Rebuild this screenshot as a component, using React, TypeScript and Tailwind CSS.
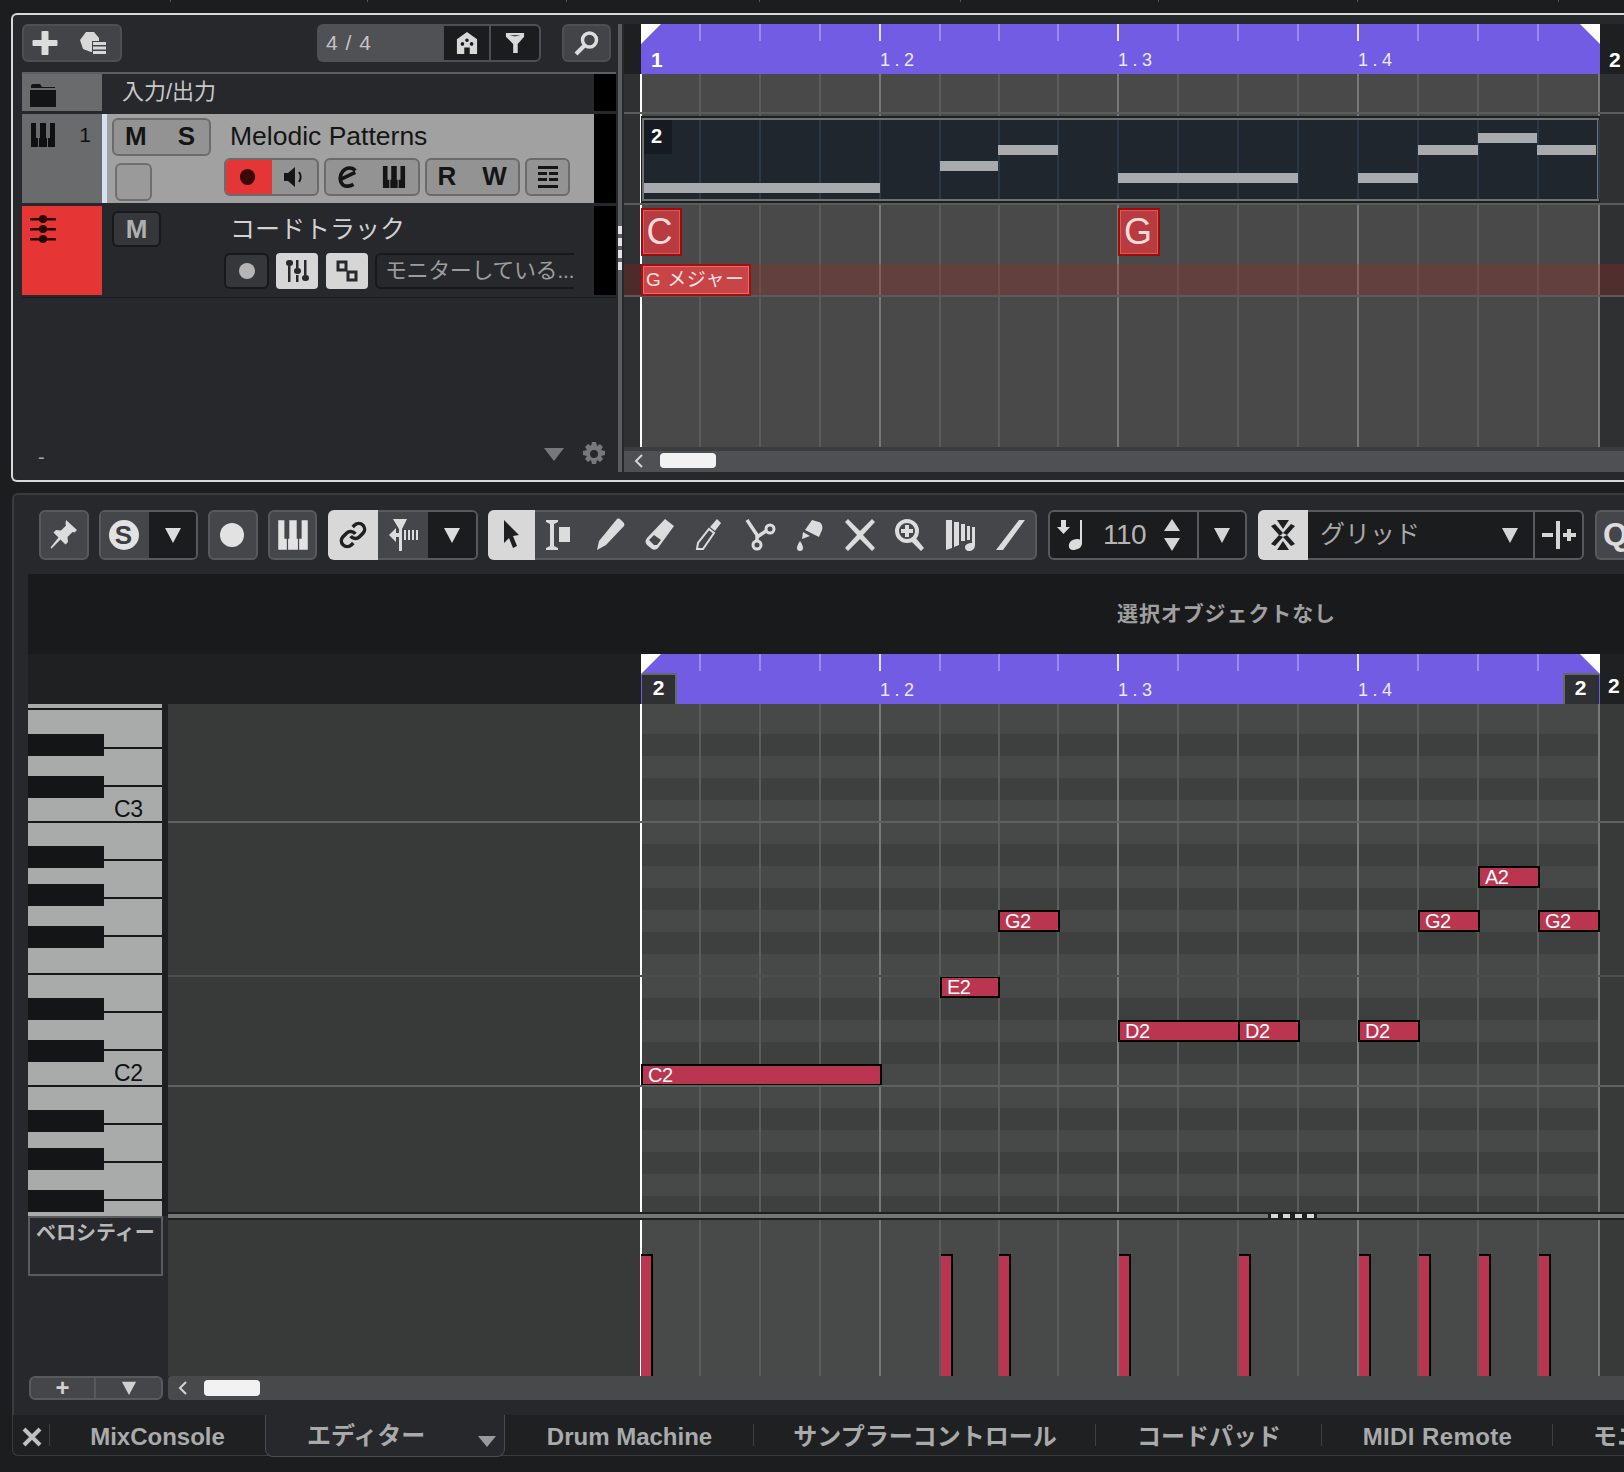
import React from 'react';

const lineLefts = [58, 118, 178, 238, 298, 357, 416, 476, 536, 596, 656, 716, 776, 836, 896, 957];
const beatLines = lineLefts.map((left, i) => ({ left, major: (i + 1) % 4 === 0 }));

const partNotes = [
  { x: 644, end: 880, y: 183 }, { x: 940, end: 998, y: 161 }, { x: 998, end: 1058, y: 145 },
  { x: 1118, end: 1298, y: 173 }, { x: 1358, end: 1418, y: 173 }, { x: 1418, end: 1478, y: 145 },
  { x: 1478, end: 1537, y: 133 }, { x: 1537, end: 1596, y: 145 },
];

const rollNotes = [
  { x: 641, end: 882, y: 1064, label: 'C2' }, { x: 940, end: 1000, y: 976, label: 'E2' },
  { x: 998, end: 1060, y: 910, label: 'G2' }, { x: 1118, end: 1240, y: 1020, label: 'D2' },
  { x: 1238, end: 1300, y: 1020, label: 'D2' }, { x: 1358, end: 1420, y: 1020, label: 'D2' },
  { x: 1418, end: 1480, y: 910, label: 'G2' }, { x: 1478, end: 1540, y: 866, label: 'A2' },
  { x: 1538, end: 1600, y: 910, label: 'G2' },
];

const velocityBars = [641, 941, 999, 1119, 1239, 1359, 1419, 1479, 1539];

const rows = [
  [8, 1], [22, 1], [22, 0], [22, 1], [22, 0], [22, 1], [22, 1], [22, 0], [22, 1], [22, 0], [22, 1], [22, 0],
  [22, 1], [22, 1], [22, 0], [22, 1], [22, 0], [22, 1], [22, 1], [22, 0], [22, 1], [22, 0], [22, 1], [16, 0],
];

const blackKeys = [734, 776, 846, 884, 926, 998, 1040, 1110, 1148, 1190];
const keyLines = [747, 785, 859, 897, 935, 1011, 1049, 1123, 1161, 1199];
const fullKeyLines = [708, 821, 973, 1085];

function GridLines({ part = false }: { part?: boolean }) {
  return (
    <>
      {beatLines.map((l) => (
        <div
          key={l.left}
          className={`absolute top-0 bottom-0 w-[2px] ${part ? 'bg-[#2a3848]' : l.major ? 'bg-[#777878]' : 'bg-[#5a5b5b]'}`}
          style={{ left: part ? l.left - 3 : l.left }}
        />
      ))}
    </>
  );
}

function PlayStart() {
  return <div className="absolute -left-[1px] top-0 bottom-0 w-[2px] bg-white" />;
}

function Ruler({ lower = false }: { lower?: boolean }) {
  const marks = [
    { left: 239, text: '1.2' },
    { left: 477, text: '1.3' },
    { left: 717, text: '1.4' },
  ];
  return (
    <div className="relative w-[959px] shrink-0 h-full bg-[#725ce3] overflow-hidden">
      {beatLines.slice(0, 15).map((l) => (
        <div
          key={l.left}
          className={`absolute top-0 h-[17px] w-[2px] ${l.major ? 'bg-[#e4dffa]' : 'bg-[#9a8ae9]'}`}
          style={{ left: l.left }}
        />
      ))}
      <svg className="absolute left-0 top-0" width="20" height="20" viewBox="0 0 20 20">
        <path d="M0 0H20L0 20Z" fill="#fff" />
      </svg>
      <svg className="absolute right-0 top-0" width="20" height="20" viewBox="0 0 20 20">
        <path d="M0 0H20V20Z" fill="#fff" />
      </svg>
      {marks.map((m) => (
        <span
          key={m.text}
          className="absolute top-[26px] text-[18px] leading-[20px] tracking-[4.5px] text-[#ece9fb]"
          style={{ left: m.left }}
        >
          {m.text}
        </span>
      ))}
      {lower ? (
        <>
          <div className="absolute left-[1px] bottom-0 w-[35px] h-[31px] bg-[#2f3033] border-t-2 border-r-2 border-[#67686a] flex items-center justify-center pb-[3px] text-[21px] font-bold text-white">2</div>
          <div className="absolute right-[1px] bottom-0 w-[36px] h-[31px] bg-[#2f3033] border-t-2 border-l-2 border-[#67686a] flex items-center justify-center pb-[3px] pr-[3px] text-[21px] font-bold text-white">2</div>
        </>
      ) : (
        <span className="absolute left-[10px] top-[24px] text-[21px] leading-[24px] font-bold text-white">1</span>
      )}
    </div>
  );
}

function KeysIcon({ size = 26, className = '' }: { size?: number; className?: string }) {
  return (
    <svg width={size} height={size} viewBox="0 0 26 26" className={className}>
      <path fill="currentColor" d="M1 1h5v15h2v9H1zM10 1h6v15h1v9H9v-9h1zM20 1h5v24h-7v-9h2z" />
    </svg>
  );
}

function Triangle({ size = 18 }: { size?: number }) {
  return (
    <svg width={size} height={size} viewBox="0 0 18 18">
      <path fill="currentColor" d="M1 2h16L9 17z" />
    </svg>
  );
}

function Btn({ w, className = '', children }: { w: string; className?: string; children?: React.ReactNode }) {
  return <div className={`${w} h-full flex items-center justify-center shrink-0 ${className}`}>{children}</div>;
}

function TopToolbar() {
  return (
    <div className="h-[38px] flex items-stretch text-[#d6d6d6]">
      <div className="w-[100px] shrink-0 rounded-[6px] border-2 border-[#4e4f52] bg-[#434447] flex items-center pl-[8px]">
        <svg width="26" height="26" viewBox="0 0 26 26"><path fill="#dcdcdc" d="M10.500 1h5a1 1 0 011 1v8h8a1 1 0 011 1v4a1 1 0 01-1 1h-8v8a1 1 0 01-1 1h-5a1 1 0 01-1-1v-8h-8a1 1 0 01-1-1v-4a1 1 0 011-1h8V2a1 1 0 011-1z" /></svg>
        <svg className="ml-[22px]" width="26" height="26" viewBox="0 0 26 26">
          <path fill="#d8d8d8" d="M6 2h8l5 6v3h-7v11h-1L3 19 0 10z" />
          <path fill="#d8d8d8" d="M13 12h13v3H13zM13 16.500h13v3H13zM13 21h13v3H13z" />
        </svg>
      </div>
      <div className="ml-[195px] w-[125px] shrink-0 rounded-l-[6px] bg-[#505154] flex items-center pl-[9px] text-[21px] tracking-[1px] text-[#c4c4c4]">4 / 4</div>
      <div className="w-[99px] shrink-0 flex rounded-r-[6px] border-2 border-[#4e4f52] bg-[#1b1c1e]">
        <Btn w="w-[47px]" className="border-r-2 border-[#4e4f52]">
          <svg width="22" height="24" viewBox="0 0 24 26">
            <path fill="#d8d8d8" fillRule="evenodd" d="M12 1l11 8v16H1V9zM12 8a2 2 0 100 4 2 2 0 000-4zM7 12a2 2 0 100 4 2 2 0 000-4zM17 12a2 2 0 100 4 2 2 0 000-4zM9 18h6v7H9z" />
          </svg>
        </Btn>
        <Btn w="flex-1">
          <svg width="20" height="24" viewBox="0 0 22 26">
            <path fill="#d8d8d8" fillRule="evenodd" d="M1 2h20v4l-7 8v10H9V14L1 6zM5 4.500l5 1h2l5-1z" />
          </svg>
        </Btn>
      </div>
      <div className="ml-[21px] w-[49px] shrink-0 rounded-[6px] border-2 border-[#4e4f52] bg-[#434447] flex items-center justify-center">
        <svg width="26" height="26" viewBox="0 0 26 26" fill="none" stroke="#dcdcdc">
          <circle cx="15.500" cy="10" r="7" strokeWidth="3.500" />
          <path d="M10 16L2 24" strokeWidth="4" />
        </svg>
      </div>
    </div>
  );
}

function TrackList() {
  return (
    <div className="w-[594px] shrink-0 flex flex-col">
      <TopToolbar />
      <div className="mt-[10px] h-[39px] flex border-t-2 border-[#5e5f60]">
        <div className="w-[80px] bg-[#6a6b6d] pl-[8px] pt-[9px]">
          <svg width="26" height="24" viewBox="0 0 26 24"><path fill="#131416" d="M1 3a2 2 0 012-2h7l2 3h13v1H1zM0 7h26v17H0z" /></svg>
        </div>
        <div className="w-[492px] pl-[20px] text-[22px] leading-[36px] text-[#c8c8c8]">入力/出力</div>
        <div className="w-[22px] bg-black" />
      </div>

      <div className="mt-[3px] h-[90px] flex">
        <div className="w-[80px] bg-[#6a6b6d] flex items-start justify-between pl-[8px] pr-[11px] pt-[8px] text-[#0f1012]">
          <KeysIcon size={26} />
          <span className="text-[21px] leading-[26px]">1</span>
        </div>
        <div className="w-[5px] bg-[#d3e1f3]" />
        <div className="w-[487px] bg-[#a1a1a1] flex pl-[5px] text-[#151515]">
          <div className="w-[99px] flex flex-col pt-[4px]">
            <div className="h-[38px] rounded-[6px] border-2 border-[#6b6b6b] bg-[#939393] flex items-center justify-between pl-[11px] pr-[14px] text-[26px] font-bold">
              <span>M</span><span>S</span>
            </div>
            <div className="mt-[7px] ml-[3px] w-[37px] h-[38px] rounded-[6px] border-2 border-[#6f6f6f] bg-[#9a9a9a]" />
          </div>
          <div className="ml-[13px] flex flex-col">
            <div className="h-[44px] pl-[6px] text-[26.500px] leading-[34px] pt-[5px]">Melodic Patterns</div>
            <div className="h-[38px] flex gap-[5px]">
              <div className="w-[95px] flex rounded-[6px] border-2 border-[#6b6b6b] bg-[#939393] overflow-hidden">
                <Btn w="w-[46px]" className="bg-[#e43636]">
                  <div className="w-[15px] h-[16px] rounded-full bg-[#3a0808] -ml-[3px]" />
                </Btn>
                <Btn w="flex-1">
                  <svg width="24" height="22" viewBox="0 0 24 22">
                    <path fill="#151515" d="M1 7h4l7-6v20l-7-6H1z" />
                    <path fill="none" stroke="#151515" strokeWidth="2" d="M16 6c2 3 2 7 0 10" />
                  </svg>
                </Btn>
              </div>
              <div className="w-[96px] flex rounded-[6px] border-2 border-[#6b6b6b] bg-[#939393]">
                <Btn w="w-[43px]">
                  <svg width="20" height="22" viewBox="0 0 22 24">
                    <path fill="none" stroke="#151515" strokeWidth="4" d="M19 5C16 1 9 1 5 6S2 18 6 21c3 2 8 1 11-1M4 14L19 7" />
                  </svg>
                </Btn>
                <Btn w="flex-1"><KeysIcon size={24} /></Btn>
              </div>
              <div className="w-[95px] flex rounded-[6px] border-2 border-[#6b6b6b] bg-[#939393] text-[26px] font-bold">
                <Btn w="w-[40px]">R</Btn>
                <Btn w="flex-1" className="pl-[4px]">W</Btn>
              </div>
              <div className="w-[45px] rounded-[6px] border-2 border-[#6b6b6b] bg-[#939393] flex items-center justify-center">
                <svg width="22" height="24" viewBox="0 0 22 24">
                  <path fill="#151515" d="M1 1h20v3H1zM1 7h9v3H1zM12 7h9v3h-9zM1 13h9v3H1zM12 13h9v3h-9zM1 20h20v3H1z" />
                </svg>
              </div>
            </div>
          </div>
        </div>
        <div className="w-[22px] bg-black" />
      </div>

      <div className="mt-[3px] h-[89px] flex">
        <div className="w-[80px] bg-[#e53535] pl-[8px] pt-[9px]">
          <svg width="26" height="28" viewBox="0 0 26 28">
            <path fill="#2a0505" d="M0 3h26v2.500H0zM0 13h26v2.500H0zM0 23h26v2.500H0z" />
            <circle cx="13" cy="4" r="4" fill="#2a0505" />
            <circle cx="13" cy="14" r="4" fill="#2a0505" />
            <circle cx="13" cy="24" r="4" fill="#2a0505" />
          </svg>
        </div>
        <div className="w-[492px] flex pl-[10px]">
          <div className="w-[112px] shrink-0 pt-[5px]">
            <div className="w-[49px] h-[36px] rounded-[6px] border-2 border-[#17181a] bg-[#35373a] flex items-center justify-center text-[26px] font-bold text-[#b0b0b0]">M</div>
          </div>
          <div className="flex flex-col">
            <div className="h-[47px] pl-[6px] pt-[7px] text-[25px] leading-[32px] text-[#d2d2d2]">コードトラック</div>
            <div className="h-[36px] flex">
              <div className="w-[45px] shrink-0 rounded-[6px] border-2 border-[#17181a] bg-[#35373a] flex items-center justify-center">
                <div className="w-[16px] h-[16px] rounded-full bg-[#b5b5b5]" />
              </div>
              <div className="ml-[7px] w-[42px] shrink-0 rounded-[4px] bg-[#d6d6d6] flex items-center justify-center">
                <svg width="24" height="26" viewBox="0 0 24 26">
                  <path fill="#26282b" d="M3 8h2.500v16H3zM11 2h2.500v8H11zM11 17h2.500v7H11zM19 2h2.500v15H19z" />
                  <rect x="1" y="2" width="7" height="6" rx="3" fill="#26282b" />
                  <rect x="9" y="10" width="7" height="6" rx="3" fill="#26282b" />
                  <rect x="17" y="17" width="7" height="6" rx="3" fill="#26282b" />
                </svg>
              </div>
              <div className="ml-[8px] w-[42px] shrink-0 rounded-[4px] bg-[#d6d6d6] flex items-center justify-center">
                <svg width="22" height="24" viewBox="0 0 22 24">
                  <path fill="none" stroke="#26282b" strokeWidth="3" d="M2 3h8v8H2zM12 13h8v8h-8z" />
                </svg>
              </div>
              <div className="ml-[7px] w-[199px] shrink-0 rounded-l-[6px] border-y-2 border-l-2 border-[#17181a] bg-[#26282b] overflow-hidden whitespace-nowrap pl-[8px] text-[22px] leading-[32px] tracking-[-0.4px] text-[#9c9c9c]">
                モニターしている...
              </div>
            </div>
          </div>
        </div>
        <div className="w-[22px] bg-black" />
      </div>
      <div className="mt-[2px] h-[1px] bg-[#1b1c1e]" />

      <div className="mt-[138px] flex items-center h-[36px] text-[#a5a5a5]">
        <span className="ml-[16px] mt-[6px] text-[20px]">-</span>
        <div className="ml-auto mr-[10px] flex items-center gap-[18px]">
          <svg width="20" height="13" viewBox="0 0 20 13"><path fill="#77787a" d="M0 0h20L10 13z" /></svg>
          <svg width="24" height="24" viewBox="0 0 24 24">
            <path fill="#77787a" fillRule="evenodd" d="M10 0h4l1 4 3-2 3 3-2 3 4 1v4l-4 1 2 3-3 3-3-2-1 4h-4l-1-4-3 2-3-3 2-3-4-1v-4l4-1-2-3 3-3 3 2zM12 8a4 4 0 100 8 4 4 0 000-8z" />
          </svg>
        </div>
      </div>
    </div>
  );
}

function Arrange() {
  return (
    <div className="flex-1 flex flex-col min-w-0">
      <div className="h-[50px] flex">
        <div className="w-[17px] bg-[#1e1f21]" />
        <Ruler />
        <div className="flex-1 bg-[#1e1f21] pl-[9px] pt-[24px] text-[21px] leading-[24px] font-bold text-white">2</div>
      </div>
      <div className="relative h-[373px] bg-[#2e3031]">
        <div className="absolute left-[17px] top-0 bottom-0 w-[959px] bg-[#484948]">
          <GridLines />
          <PlayStart />
        </div>
        <div className="absolute left-0 w-[17px] top-[190px] h-[32px] bg-[#4d2b2a]" />
        <div className="absolute left-[17px] right-0 top-[190px] h-[32px] bg-[#a02a28]/30" />
        <div className="absolute left-0 right-0 top-[38px] h-[2px] bg-[#5a5b5b]" />
        <div className="absolute left-0 right-0 top-[129px] h-[2px] bg-[#5a5b5b]" />
        <div className="absolute left-0 right-0 top-[221px] h-[2px] bg-[#5a5b5b]" />

        <div className="absolute left-[17px] top-[42px] h-[87px] w-[959px] bg-[#1e1f21] px-[1px] py-[2px]">
          <div className="relative h-full border-2 border-[#6f7070] bg-[#20262e]">
            <GridLines part />
            <div className="absolute left-0 top-0 w-[28px] h-[34px] bg-[#161b22] pl-[7px] pt-[3px] text-[20px] leading-[26px] font-bold text-white">2</div>
            {partNotes.map((n) => (
              <div
                key={n.x}
                className="absolute h-[10px] bg-[#a8aaad]"
                style={{ left: n.x - 644, width: n.end - n.x, top: n.y - 118 - 2 }}
              />
            ))}
          </div>
        </div>

        {[{ x: 0, w: 41, label: 'C', pad: 'pr-[4px]' }, { x: 477, w: 42, label: 'G', pad: 'pr-[2px]' }].map((c) => (
          <div
            key={c.label}
            className={`absolute top-[134px] h-[48px] border-2 border-[#9c0c0c] bg-[#b83b3f] outline outline-1 -outline-offset-3 outline-[#dc5a5a] flex items-center justify-center text-[36px] text-[#fbdcdc] ${c.pad}`}
            style={{ left: 17 + c.x, width: c.w }}
          >
            {c.label}
          </div>
        ))}
        <div className="absolute left-[17px] top-[190px] w-[110px] h-[32px] border-2 border-[#a01212] bg-[#c94446] outline outline-1 -outline-offset-3 outline-[#f26868] flex items-center pl-[3px] text-[19px] tracking-[0.6px] text-[#fde3e3] whitespace-nowrap">
          G メジャー
        </div>
      </div>
      <div className="h-[25px] border-t-[4px] border-[#3b3c3e] bg-[#4f5053] flex items-center">
        <svg className="ml-[10px] -mt-[2px]" width="10" height="14" viewBox="0 0 10 14"><path fill="none" stroke="#d5d5d5" strokeWidth="2" d="M8 1L2 7l6 6" /></svg>
        <div className="ml-[16px] -mt-[2px] w-[56px] h-[15px] rounded-[4px] bg-[#f2f2f2]" />
      </div>
    </div>
  );
}

function ToolIcon({ d, children }: { d?: string; children?: React.ReactNode }) {
  return (
    <div className="w-[50px] h-full flex items-center justify-center shrink-0 text-[#dcdcdc]">
      <svg width="32" height="34" viewBox="0 0 32 34" fill="currentColor">
        {d && <path d={d} />}
        {children}
      </svg>
    </div>
  );
}

function EditorToolbar() {
  return (
    <div className="mt-[15px] h-[50px] ml-[25px] flex text-[#dcdcdc] whitespace-nowrap [&>*]:shrink-0">
      <div className="w-[50px] rounded-[6px] border-2 border-[#58595c] bg-[#454649] flex items-center justify-center">
        <svg width="30" height="32" viewBox="0 0 30 32">
          <path fill="#dcdcdc" d="M17 1l11 10-2.500 2.500-2-.5-5 5 .5 5-2.500 2.500-5-5-9 9-1-1 8-10-5-5L7 11l5 .5 5-5-.5-2z" />
        </svg>
      </div>
      <div className="ml-[10px] w-[99px] flex rounded-[6px] border-2 border-[#58595c] overflow-hidden">
        <div className="w-[48px] bg-[#454649] flex items-center justify-center pr-[3px]">
          <div className="w-[30px] h-[30px] rounded-full bg-[#e2e2e2] flex items-center justify-center text-[26px] leading-none font-bold text-[#3c3d40]">S</div>
        </div>
        <div className="flex-1 bg-[#1b1c1e] flex items-center justify-center"><Triangle /></div>
      </div>
      <div className="ml-[10px] w-[50px] rounded-[6px] border-2 border-[#58595c] bg-[#454649] flex items-center justify-center">
        <div className="w-[24px] h-[24px] rounded-full bg-[#e2e2e2] -ml-[2px]" />
      </div>
      <div className="ml-[10px] w-[49px] rounded-[6px] border-2 border-[#58595c] bg-[#454649] flex items-center justify-center text-[#e2e2e2]">
        <KeysIcon size={32} />
      </div>
      <div className="ml-[11px] w-[50px] rounded-l-[6px] bg-[#d8d8d8] flex items-center justify-center">
        <svg width="28" height="28" viewBox="0 0 24 24" fill="none" stroke="#1e1f21" strokeWidth="3">
          <path d="M10 13a5 5 0 0 0 7.540.54l3-3a5 5 0 0 0-7.070-7.070l-1.720 1.710" />
          <path d="M14 11a5 5 0 0 0-7.540-.54l-3 3a5 5 0 0 0 7.070 7.070l1.710-1.710" />
        </svg>
      </div>
      <div className="w-[100px] flex rounded-r-[6px] border-y-2 border-r-2 border-[#58595c] overflow-hidden">
        <div className="w-[50px] bg-[#454649] flex items-center justify-center pr-[4px]">
          <svg width="36" height="34" viewBox="0 0 36 34">
            <path fill="#dcdcdc" d="M6 17l7-7v14zM10 15h7v4h-7zM10 1h14l-5 10v22h-3V11z" />
            <path fill="#dcdcdc" d="M21 12h2v10h-2zM25 12h2v10h-2zM29 12h2v10h-2zM33 12h2v10h-2z" />
          </svg>
        </div>
        <div className="flex-1 bg-[#1b1c1e] flex items-center justify-center"><Triangle /></div>
      </div>

      <div className="ml-[10px] w-[549px] flex rounded-[6px] border-2 border-l-0 border-[#58595c] bg-[#454649]">
        <div className="-my-[2px] w-[50px] rounded-l-[6px] bg-[#d8d8d8] flex items-center justify-center text-[#1e1f21]">
          <svg width="24" height="32" viewBox="0 0 24 32"><path fill="currentColor" d="M4 1l15 15-6 1 4 10-4 2-4-10-5 5z" /></svg>
        </div>
        <ToolIcon d="M2 2h12v2l-4 2v22l4 2v2H2v-2l4-2V6L2 4zM15 9h11v15H15z" />
        <ToolIcon d="M23 1c2-1 3 0 5 2s3 3 2 5L12 27 3 32l2-9z" />
        <ToolIcon>
          <path fillRule="evenodd" d="M21 1l9 7-16 22c-2 2-4 2-6 1l-5-4c-2-2-2-5 0-7zM10 17l-5 5 5 5 3 0 4-5z" />
        </ToolIcon>
        <ToolIcon>
          <path fill="none" stroke="currentColor" strokeWidth="2" d="M3 31l1-6 11-14 5 4-11 16z" />
          <path d="M21 13l-5-4 7-8 4 4z" />
        </ToolIcon>
        <ToolIcon>
          <path fill="none" stroke="currentColor" strokeWidth="3.500" d="M3 2l10 15v6" />
          <path fill="none" stroke="currentColor" strokeWidth="3.500" d="M13 19l9-6" />
          <circle cx="13" cy="27" r="4" fill="none" stroke="currentColor" strokeWidth="3" />
          <circle cx="26" cy="11" r="4" fill="none" stroke="currentColor" strokeWidth="3" />
        </ToolIcon>
        <ToolIcon d="M18 2l7 2c3 1 4 5 3 8l-3 7-14-7zM9 14l7 4-8 3zM6 23c2 3 3 5 3 7s-1 3-3 3-3-1-3-3 1-4 3-7z" />
        <ToolIcon d="M4 1l12 12L28 1l3 3-12 13 12 13-3 3-12-12L4 33l-3-3 12-13L1 4z" />
        <ToolIcon>
          <circle cx="13" cy="13" r="10" fill="none" stroke="currentColor" strokeWidth="4" />
          <path d="M21 19l9 11-3 3-10-10zM11 7h4v4h4v4h-4v4h-4v-4H7v-4h4z" />
        </ToolIcon>
        <ToolIcon d="M2 2h6v28l-6 2zM10 4h5v23l-5 2zM17 6h4v17h-4zM23 8h3v14h-3zM28 9h3v18c0 4-3 6-6 6s-4-2-4-4 3-4 7-4V9z" />
        <ToolIcon d="M25 2h6L9 32H2z" />
      </div>

      <div className="ml-[11px] w-[199px] flex rounded-[6px] border-2 border-[#58595c] bg-[#1b1c1e] text-[#b5b5b5]">
        <div className="flex-1 flex items-center pl-[6px]">
          <svg width="28" height="32" viewBox="0 0 28 32">
            <path fill="#dcdcdc" d="M5 1h5v7h4l-6.500 7L1 8h4zM24 1h2v24h-2zM15 22c4-3 11-3 11 2s-5 7-9 7-6-5-2-9z" />
          </svg>
          <span className="ml-[19px] text-[28px] tracking-[-0.5px]">110</span>
          <svg className="ml-[17px]" width="18" height="34" viewBox="0 0 18 34">
            <path fill="#d5d5d5" d="M9 1l8 12H1zM1 20h16L9 33z" />
          </svg>
        </div>
        <div className="w-[48px] border-l-2 border-[#58595c] flex items-center justify-center text-[#d5d5d5]"><Triangle /></div>
      </div>
      <div className="ml-[11px] w-[326px] flex rounded-[6px] border-2 border-l-0 border-[#58595c] bg-[#1b1c1e]">
        <div className="-my-[2px] w-[50px] rounded-l-[6px] bg-[#d8d8d8] flex items-center justify-center">
          <svg width="28" height="32" viewBox="0 0 28 32">
            <path fill="#1e1f21" d="M8 1h12l-6 9zM8 31h12l-6-9zM2 7l4-2 8 9-2 2-2 0zM26 7l-4-2-8 9 4 2zM2 25l4 2 8-9-4-2zM26 25l-4 2-8-9 4-2z" />
          </svg>
        </div>
        <div className="flex-1 flex items-center pl-[12px] pr-[14px] text-[25px] text-[#a8a8a8]">
          グリッド
          <span className="ml-auto text-[#d5d5d5]"><Triangle /></span>
        </div>
        <div className="w-[49px] border-l-2 border-[#58595c] flex items-center justify-center">
          <svg width="36" height="30" viewBox="0 0 36 30">
            <path fill="#d5d5d5" d="M1 13h11v4H1zM15 1h4v28h-4zM22 13h4V9h4v4h5v4h-5v4h-4v-4h-4z" />
          </svg>
        </div>
      </div>
      <div className="ml-[11px] w-[60px] rounded-l-[6px] border-2 border-r-0 border-[#58595c] bg-[#454649] pl-[6px] text-[32px] leading-[44px] font-bold text-[#dcdcdc]">Q</div>
    </div>
  );
}

function PianoKeys() {
  return (
    <div className="relative w-[134px] shrink-0 h-[512px] bg-[#a9abaa] overflow-hidden">
      {fullKeyLines.map((y) => (
        <div key={y} className="absolute left-0 right-0 h-[2px] bg-[#17181a]" style={{ top: y - 704 }} />
      ))}
      {keyLines.map((y) => (
        <div key={y} className="absolute left-[76px] right-0 h-[2px] bg-[#17181a]" style={{ top: y - 704 }} />
      ))}
      {blackKeys.map((y) => (
        <div key={y} className="absolute left-0 w-[76px] h-[22px] bg-[#141516]" style={{ top: y - 704 }} />
      ))}
      <span className="absolute left-[86px] top-[92px] text-[23px] leading-[26px] tracking-[-0.3px] text-[#111]">C3</span>
      <span className="absolute left-[86px] top-[356px] text-[23px] leading-[26px] tracking-[-0.3px] text-[#111]">C2</span>
    </div>
  );
}

function PianoRoll() {
  const lines = [
    { y: 821, c: 'bg-[#5f6060]' },
    { y: 975, c: 'bg-[#4c4d4d]' },
    { y: 1085, c: 'bg-[#5f6060]' },
  ];
  return (
    <div className="relative flex-1 h-[508px] flex bg-[#383a39] overflow-hidden">
      <div className="w-[473px] shrink-0" />
      <div className="relative w-[959px] shrink-0 flex flex-col">
        {rows.map(([h, light], i) => (
          <div
            key={i}
            className={light ? 'bg-[#474948]' : 'bg-[#3e403f]'}
            style={{ height: h }}
          />
        ))}
        <GridLines />
        <PlayStart />
        {rollNotes.map((n) => (
          <div
            key={n.x}
            className="absolute h-[22px] border-2 border-black bg-[#ba3650] pl-[5px] text-[20px] leading-[18px] tracking-[-0.5px] text-white overflow-hidden"
            style={{ left: n.x - 641, width: n.end - n.x, top: n.y - 704 }}
          >
            {n.label}
          </div>
        ))}
      </div>
      {lines.map((l) => (
        <div key={l.y} className={`absolute left-0 right-0 h-[2px] ${l.c}`} style={{ top: l.y - 704 }} />
      ))}
    </div>
  );
}

function Editor() {
  return (
    <div className="ml-[12px] h-[922px] shrink-0 border-l-2 border-t-2 border-[#3a3b3d] rounded-tl-[6px] bg-[#26282b] flex flex-col">
      <EditorToolbar />
      <div className="mt-[14px] ml-[14px] h-[80px] bg-[#191a1c] flex items-center text-[21px] font-bold text-[#a0a0a0] tracking-[0.9px]">
        <span className="ml-[1089px]">選択オブジェクトなし</span>
      </div>
      <div className="ml-[14px] h-[50px] flex bg-[#1f2022]">
        <div className="w-[613px] shrink-0" />
        <Ruler lower />
        <div className="flex-1 pl-[8px] pt-[20px] text-[21px] leading-[24px] font-bold text-white">2</div>
      </div>
      <div className="ml-[14px] flex items-start bg-[#1e1f21]">
        <PianoKeys />
        <div className="ml-[6px] flex-1 min-w-0 flex flex-col">
          <PianoRoll />
        </div>
      </div>
      <div className="-mt-[4px] ml-[14px] flex h-[164px]">
        <div className="w-[135px] shrink-0 flex flex-col">
          <div className="mt-[4px] h-[60px] border-2 border-[#5a5b5d] bg-[#26282b] pl-[6px] text-[20px] leading-[24px] pt-[3px] font-bold text-[#b8b8b8] whitespace-nowrap">ベロシティー</div>
        </div>
        <div className="ml-[5px] flex-1 min-w-0 flex flex-col">
          <div className="relative h-[8px] bg-[#1e1f21] flex items-center">
            <div className="h-[4px] w-full bg-[#747575]" />
            <div className="absolute left-[1100px] flex gap-[5px] bg-[#1e1f21] px-[3px] h-[4px]">
              {[0, 1, 2, 3].map((i) => (
                <div key={i} className="w-[7px] h-[4px] bg-[#d8d8d8]" />
              ))}
            </div>
          </div>
          <div className="flex-1 flex bg-[#383a39]">
            <div className="w-[473px] shrink-0" />
            <div className="relative w-[959px] shrink-0 bg-[#484949]">
              <GridLines />
              <PlayStart />
              {velocityBars.map((x) => (
                <div
                  key={x}
                  className="absolute top-[34px] bottom-0 w-[12px] border-t-2 border-r-2 border-black bg-[#ba3650]"
                  style={{ left: x - 641 }}
                />
              ))}
            </div>
          </div>
        </div>
      </div>
      <div className="ml-[15px] h-[24px] flex text-[#d0d0d0]">
        <div className="w-[134px] shrink-0 flex rounded-[6px] border-2 border-[#58595c] bg-[#454649]">
          <div className="w-[65px] border-r-2 border-[#58595c] flex items-center justify-center text-[24px] font-bold leading-none">+</div>
          <div className="flex-1 flex items-center justify-center"><Triangle size={16} /></div>
        </div>
        <div className="ml-[5px] flex-1 bg-[#48494b] rounded-l-[4px] flex items-center">
          <svg className="ml-[10px]" width="10" height="14" viewBox="0 0 10 14"><path fill="none" stroke="#d5d5d5" strokeWidth="2" d="M8 1L2 7l6 6" /></svg>
          <div className="ml-[16px] w-[56px] h-[16px] rounded-[4px] bg-[#f2f2f2]" />
        </div>
      </div>
    </div>
  );
}

function TabLabel({ w, divider = true, children }: { w: string; divider?: boolean; children: React.ReactNode }) {
  return (
    <div className={`${w} relative h-full shrink-0 flex items-center justify-center pt-[3px]`}>
      {children}
      {divider && <div className="absolute right-0 top-[9px] bottom-[9px] w-[1px] bg-[#3f4042]" />}
    </div>
  );
}

function Tabs() {
  return (
    <div className="ml-[12px] h-[41px] shrink-0 flex rounded-bl-[6px] border-l border-b border-[#3a3b3d] bg-[#1f2022] text-[24px] font-bold text-[#a9aaaa] whitespace-nowrap">
      <TabLabel w="w-[37px]">
        <svg width="20" height="20" viewBox="0 0 20 20"><path fill="none" stroke="#c0c0c0" strokeWidth="4" d="M2 2l16 16M18 2L2 18" /></svg>
      </TabLabel>
      <TabLabel w="w-[215px]" divider={false}>MixConsole</TabLabel>
      <div className="relative w-[240px] shrink-0 h-[42px] rounded-b-[8px] border-x border-b border-[#4a4b4d] bg-[#26282b] flex items-center pl-[41px] pt-[1px]">
        エディター
        <svg className="absolute right-[8px] top-[21px]" width="18" height="11" viewBox="0 0 18 11"><path fill="#9a9a9a" d="M0 0h18L9 11z" /></svg>
      </div>
      <TabLabel w="w-[249px]">Drum Machine</TabLabel>
      <TabLabel w="w-[342px]">サンプラーコントロール</TabLabel>
      <TabLabel w="w-[226px]">コードパッド</TabLabel>
      <TabLabel w="w-[231px]"><span className="tracking-[0.4px]">MIDI Remote</span></TabLabel>
      <div className="pl-[40px] pt-[3px] h-full flex items-center">モニター</div>
    </div>
  );
}

export default function App() {
  return (
    <div className="w-[1624px] h-[1472px] overflow-hidden flex flex-col bg-[#1c1d1f] font-['Liberation_Sans','Noto_Sans_CJK_JP',sans-serif]">
      <div className="relative h-[13px] shrink-0">
        {[170, 367, 566, 759, 960, 1158, 1357, 1558].map((x) => (
          <div key={x} className="absolute top-0 h-[2px] w-[1px] bg-[#55565a]" style={{ left: x }} />
        ))}
      </div>
      <div className="ml-[11px] h-[469px] shrink-0 border-2 border-r-0 border-[#d9d9d9] rounded-l-[6px] bg-[#26282b] flex pl-[9px] pt-[9px] pb-[8px] overflow-hidden">
        <TrackList />
        <div className="relative w-[8px] shrink-0 mx-0">
          <div className="absolute left-[2px] top-0 bottom-0 w-[4px] bg-[#5c5d5f]" />
          <div className="absolute left-[2px] top-[202px] flex flex-col gap-[4px]">
            {[0, 1, 2, 3].map((i) => (
              <div key={i} className="w-[4px] h-[8px] bg-[#e4e4e4]" />
            ))}
          </div>
        </div>
        <Arrange />
      </div>
      <div className="h-[11px] shrink-0" />
      <Editor />
      <Tabs />
    </div>
  );
}
